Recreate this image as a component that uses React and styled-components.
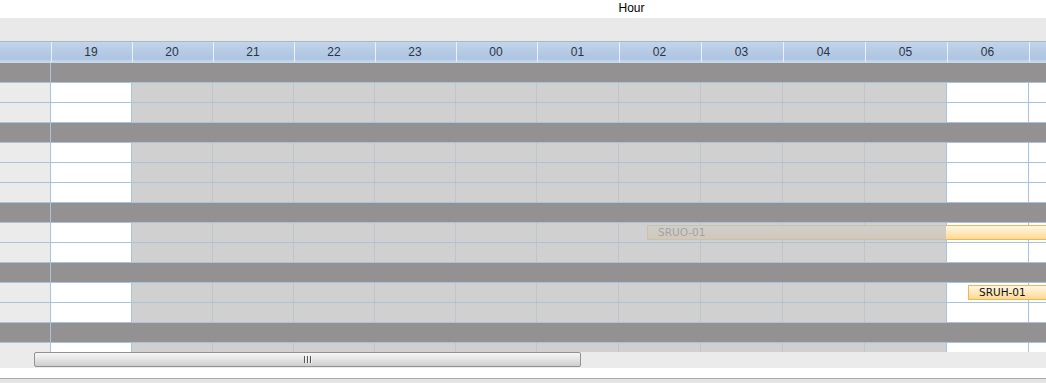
import React from 'react'
import styled, { createGlobalStyle } from 'styled-components'

const GlobalStyle = createGlobalStyle`
    html, body {
        margin: 0;
        padding: 0;
        background: #fff;
        overflow: hidden;
    }
    body {
        font-family: "Liberation Sans", Arial, sans-serif;
    }
`

const LINE = '#a8c4dc'
const PANEL_W = 51

// hour columns, widths include the 1px right border
// the last one runs past the window, its label is out of view
const HOURS = [
    ['19', 81], ['20', 81], ['21', 81], ['22', 81], ['23', 81], ['00', 81],
    ['01', 82], ['02', 82], ['03', 82], ['04', 82], ['05', 82], ['06', 82], ['', 82],
]

// non working time, in lane pixels
const SHADE = { left: 81, width: 814 }

const ROWS = [
    { group: true },
    { events: [] },
    { events: [] },
    { group: true },
    { events: [] },
    { events: [] },
    { events: [] },
    { group: true },
    { events: [{ label: 'SRUO-01', left: 596, width: 520 }] },
    { events: [] },
    { group: true },
    { events: [{ label: 'SRUH-01', left: 917, width: 200 }] },
    { events: [] },
    { group: true },
    { events: [] },
]

const Page = styled.div`
    width: 1046px;
    overflow: hidden;
`

const Title = styled.div`
    height: 18px;
    line-height: 16px;
    padding-left: 217px;
    text-align: center;
    font-size: 12px;
    color: #000;
`

const Band = styled.div`
    height: 23px;
    background: #e9e9e9;
    border-bottom: 1px solid #a9b6c4;
`

const HeaderRow = styled.div`
    display: flex;
    height: 20px;
    border-bottom: 1px solid #c8d7e9;
    background: linear-gradient(#c3d5eb 0%, #b6cbe5 45%, #adc5e1 85%, #cddcee 100%);
`

const HeaderCell = styled.div`
    flex: 0 0 ${p => p.$w}px;
    box-sizing: border-box;
    border-left: 1px solid rgba(240, 246, 252, 0.9);
    padding-right: 2px;
    line-height: 20px;
    text-align: center;
    font-size: 12px;
    color: #2b3445;
    &:first-child {
        border-left: none;
    }
`

const Body = styled.div`
    height: 289px;
    overflow: hidden;
`

const Row = styled.div`
    display: flex;
    height: 20px;
    box-sizing: border-box;
    border-bottom: 1px solid ${LINE};
    background: ${p => (p.$group ? '#939191' : 'transparent')};
`

const PanelCell = styled.div`
    flex: 0 0 ${PANEL_W}px;
    box-sizing: border-box;
    border-right: 1px solid ${LINE};
    background: ${p => (p.$group ? '#939191' : '#ebebeb')};
`

const Lane = styled.div`
    position: relative;
    display: flex;
    flex: 1;
    overflow: hidden;
`

const Cell = styled.div`
    flex: 0 0 ${p => p.$w}px;
    box-sizing: border-box;
    border-right: 1px solid ${LINE};
    background: #fff;
`

const Shade = styled.div`
    position: absolute;
    top: 0;
    bottom: 0;
    background: rgba(196, 196, 196, 0.8);
    z-index: 2;
`

const Event = styled.div`
    position: absolute;
    top: 2px;
    height: 15px;
    box-sizing: border-box;
    padding-left: 10px;
    border: 1px solid #f6b54e;
    background: linear-gradient(#fff6e2 0%, #ffe7b8 55%, #ffd991 100%);
    font-family: "DejaVu Sans", Tahoma, sans-serif;
    font-size: 10.5px;
    line-height: 13px;
    color: #111;
    white-space: nowrap;
    z-index: 1;
`

const Track = styled.div`
    height: 16px;
    background: #ebebeb;
    padding-left: 34px;
`

const Thumb = styled.div`
    width: 547px;
    height: 15px;
    box-sizing: border-box;
    border: 1px solid #929292;
    border-radius: 2px;
    background: linear-gradient(#f6f6f6 0%, #e6e6e6 45%, #cdcdcd 100%);
    display: flex;
    justify-content: center;
    align-items: center;
    gap: 1px;
`

const Grip = styled.span`
    width: 1px;
    height: 7px;
    background: #555;
    border-right: 1px solid #f2f2f2;
`

const Spacer = styled.div`
    height: 10px;
    background: #fff;
`

const Footer = styled.div`
    height: 8px;
    border-top: 1px solid #ababab;
    background: #e4e4e4;
`

function TimelineRow({ row }) {
    if (row.group) {
        return (
            <Row $group>
                <PanelCell $group />
            </Row>
        )
    }
    return (
        <Row>
            <PanelCell />
            <Lane>
                {HOURS.map(([h, w], i) => <Cell key={i} $w={w} />)}
                {row.events.map(ev => (
                    <Event key={ev.label} style={{ left: ev.left, width: ev.width }}>
                        {ev.label}
                    </Event>
                ))}
                <Shade style={{ left: SHADE.left, width: SHADE.width }} />
            </Lane>
        </Row>
    )
}

export default function App() {
    return (
        <Page>
            <GlobalStyle />
            <Title>Hour</Title>
            <Band />
            <HeaderRow>
                <HeaderCell $w={PANEL_W} />
                {HOURS.map(([h, w], i) => (
                    <HeaderCell key={i} $w={w}>{h}</HeaderCell>
                ))}
            </HeaderRow>
            <Body>
                {ROWS.map((row, i) => <TimelineRow key={i} row={row} />)}
            </Body>
            <Track>
                <Thumb>
                    <Grip />
                    <Grip />
                    <Grip />
                </Thumb>
            </Track>
            <Spacer />
            <Footer />
        </Page>
    )
}
